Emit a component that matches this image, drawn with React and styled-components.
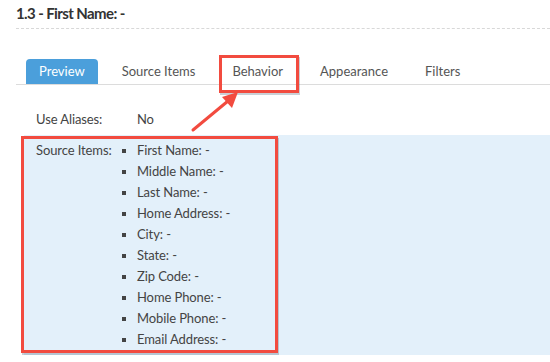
import styled, { createGlobalStyle } from "styled-components";

const GlobalStyle = createGlobalStyle`
  body {
    margin: 0;
    background: #fff;
    font-family: Lato, "Liberation Sans", Arial, sans-serif;
  }
`;

// Page wrapper, also the frame for the red call-outs
const Page = styled.div`
  position: relative;
  width: 550px;
  height: 362px;
  overflow: hidden;
  padding-left: 16px;
  box-sizing: border-box;
`;

const Header = styled.div`
  height: 28px;
  border-bottom: 1px dashed #d8d8d8;
  box-sizing: content-box;
`;

const Title = styled.h1`
  margin: 0;
  padding-top: 4px;
  font-size: 15px;
  line-height: 18px;
  font-weight: 700;
  color: #333;
  letter-spacing: -0.6px;
`;

const TabBar = styled.div`
  display: flex;
  align-items: flex-end;
  margin-top: 30px;
  padding-left: 10px;
  height: 25px;
  border-bottom: 1px solid #dcdcdc;
`;

const Tab = styled.div`
  height: 25px;
  line-height: 25px;
  padding: 0 13px;
  margin-right: 11px;
  font-size: 13px;
  color: ${({ $active }) => ($active ? "#fff" : "#555")};
  background: ${({ $active }) => ($active ? "#4b9fdb" : "transparent")};
  border-radius: 4px 4px 0 0;
  box-sizing: border-box;
`;

const Row = styled.div`
  display: grid;
  grid-template-columns: 101px 1fr;
  padding-left: 20px;
  font-size: 13px;
  color: #444;
  letter-spacing: -0.1px;
`;

const AliasRow = styled(Row)`
  margin-top: 26px;
  height: 24px;
  line-height: 16px;
`;

const Panel = styled(Row)`
  margin-left: 8px;
  padding-left: 12px;
  padding-top: 7px;
  height: 220px;
  box-sizing: border-box;
  background: #e3f0fa;
`;

const Label = styled.div`
  line-height: 16px;
`;

const List = styled.ul`
  margin: 0;
  padding: 0;
  list-style: none;
`;

const Item = styled.li`
  position: relative;
  height: 21px;
  line-height: 16px;

  &::before {
    content: "";
    position: absolute;
    left: -15px;
    top: 7px;
    width: 4px;
    height: 4px;
    background: #444;
  }
`;

// Annotation overlays
const CallOut = styled.div`
  position: absolute;
  left: ${({ $x }) => $x}px;
  top: ${({ $y }) => $y}px;
  width: ${({ $w }) => $w}px;
  height: ${({ $h }) => $h}px;
  border: 3px solid #f24b3f;
  box-sizing: border-box;
  box-shadow: 1px 2px 0 rgba(80, 100, 120, 0.3);
`;

const Arrow = styled.svg`
  position: absolute;
  left: 0;
  top: 0;
`;

const items = [
  "First Name: -",
  "Middle Name: -",
  "Last Name: -",
  "Home Address: -",
  "City: -",
  "State: -",
  "Zip Code: -",
  "Home Phone: -",
  "Mobile Phone: -",
  "Email Address: -",
];

const tabs = ["Preview", "Source Items", "Behavior", "Appearance", "Filters"];

export default function App() {
  return (
    <>
      <GlobalStyle />
      <Page>
        <Header>
          <Title>1.3 - First Name: -</Title>
        </Header>

        <TabBar>
          {tabs.map((t, i) => (
            <Tab key={t} $active={i === 0}>
              {t}
            </Tab>
          ))}
        </TabBar>

        <AliasRow>
          <Label>Use Aliases:</Label>
          <Label>No</Label>
        </AliasRow>

        <Panel>
          <Label>Source Items:</Label>
          <List>
            {items.map((it) => (
              <Item key={it}>{it}</Item>
            ))}
          </List>
        </Panel>

        <CallOut $x={219} $y={55} $w={80} $h={38} />
        <CallOut $x={21} $y={136} $w={257} $h={217} />
        <Arrow width="550" height="362" viewBox="0 0 550 362">
          <line x1="193" y1="130" x2="228" y2="101" stroke="#f24b3f" strokeWidth="3" strokeLinecap="round" />
          <polygon points="238,92 222,97 232,108" fill="#f24b3f" />
        </Arrow>
      </Page>
    </>
  );
}
